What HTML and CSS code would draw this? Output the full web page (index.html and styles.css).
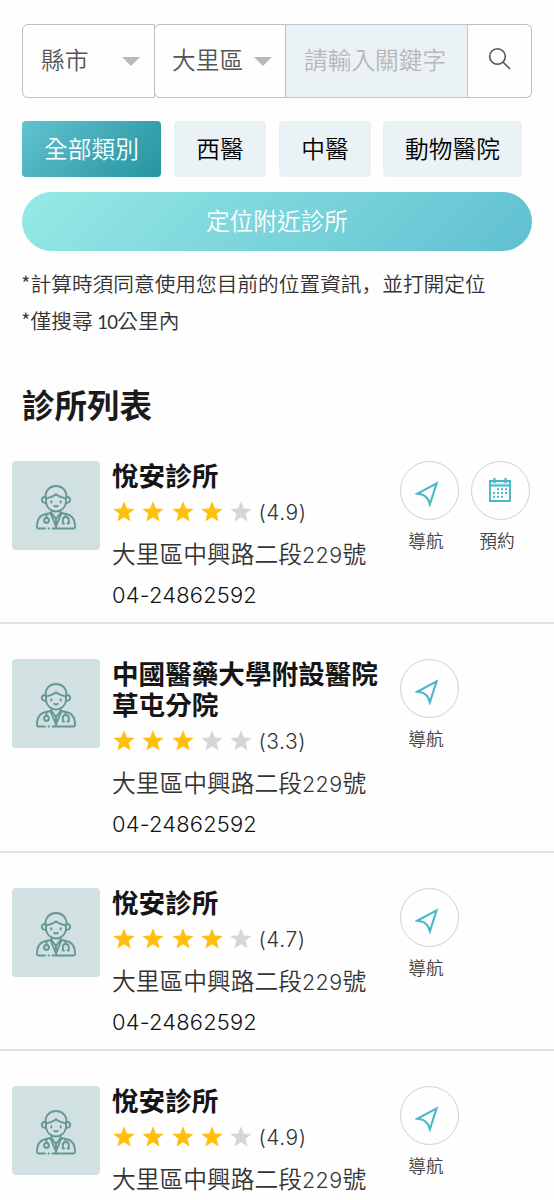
FILE: index.html
```
<!DOCTYPE html>
<html lang="zh-Hant">
<head>
<meta charset="utf-8">
<title>診所列表</title>
<link rel="stylesheet" href="styles.css">
</head>
<body>
<svg class="defs" width="0" height="0">
  <symbol id="star" viewBox="0.500 0.300 21 20"><path d="M11 .5l2.7 6.9 7.5.4-5.8 4.7 1.9 7.4L11 15.9l-6.3 4 1.9-7.4L.8 7.8l7.5-.4z" fill="currentColor"/></symbol>
  <symbol id="nav" viewBox="0 0 24 26"><path d="M21.6 2.4L2.2 12.7Q9 13.500 11 16 13.500 18 14.900 23.200Z" fill="none" stroke="currentColor" stroke-width="2.100"/></symbol>
  <symbol id="calendar" viewBox="0 0 24 26"><path d="M2 4H22V24H2ZM2 8.500H22" fill="none" stroke="currentColor" stroke-width="1.900"/><path d="M1.500 4H22.500V8H1.500Z" fill="currentColor" opacity=".2"/><path d="M6.500 1V6M17.500 1V6" stroke="currentColor" stroke-width="2.300"/><path d="M9 12.300H20M5 16H20M5 19.800H16" fill="none" stroke="currentColor" stroke-width="2" stroke-dasharray="2 2"/></symbol>
  <symbol id="doctor" viewBox="0 0 40 45"><g fill="none" stroke="currentColor" stroke-width="1.900" stroke-linecap="round" stroke-linejoin="round">
    <path d="M9.500 12.500V11.500C9.500 5 14 1 20 1S30.500 5 30.500 11.500V12.500"/>
    <path d="M10 13.500C14.500 12.500 17.500 11.500 20 9.300 22.500 11.500 25.500 12.500 30 13.500"/>
    <path d="M10 13.500V17.500C10.500 22.500 15 26.500 20 26.500S29.500 22.500 30 17.500V13.500"/>
    <path d="M9.500 12C4.500 11.500 4.500 18 10 18M30.500 12C35.500 11.500 35.500 18 30 18"/>
    <path d="M15.300 16.300V17.500M24.700 16.300V17.500M18.200 20.800C19.300 21.800 20.700 21.800 21.800 20.800"/>
    <path d="M15.500 25.500V28L20 34 24.500 28V25.500M15.500 28C7.500 29 2 30 1 40V42Q1 43.500 2.500 43.500H9M12.500 43.500H13M16.500 43.500H37.500Q39 43.500 39 42V40C38 30 32.500 29 24.500 28"/>
    <path d="M14.500 28L20 41.500 25.500 28M20 34V43"/>
    <path d="M10.500 29.500V33"/><circle cx="10.500" cy="35.400" r="2.400"/>
    <path d="M29.500 29.500V32M28 38.500H26.800V35C26.800 31 32.800 31 32.800 35V38.500H31.500"/>
  </g></symbol>
</svg>
<main>
  <section class="search-area">
    <div class="search">
      <div class="select">縣市<i class="caret"></i></div>
      <div class="select second">大里區<i class="caret"></i></div>
      <div class="keyword">請輸入關鍵字</div>
      <div class="submit"><svg width="24" height="24" viewBox="0 0 24 24"><circle cx="9.500" cy="9.500" r="7.800"/><path d="M15.200 15.200L22 22"/></svg></div>
    </div>
    <nav class="tabs">
      <a class="tab active">全部類別</a><a class="tab">西醫</a><a class="tab">中醫</a><a class="tab">動物醫院</a>
    </nav>
    <div class="locate">定位附近診所</div>
    <p class="note">*計算時須同意使用您目前的位置資訊<span class="comma" lang="zh-Hans">，</span>並打開定位</p>
    <p class="note">*僅搜尋 <span class="ten">10</span>公里內</p>
    <h1>診所列表</h1>
  </section>
  <section class="list">
    <article class="clinic">
      <div class="photo"><svg><use href="#doctor"/></svg></div>
      <div class="info">
        <h2>悅安診所</h2>
        <div class="rating"><svg><use href="#star"/></svg><svg><use href="#star"/></svg><svg><use href="#star"/></svg><svg><use href="#star"/></svg><svg class="off"><use href="#star"/></svg><span>(4.9)</span></div>
        <div class="address">大里區中興路二段<span class="num">229</span>號</div>
        <div class="phone">04-24862592</div>
      </div>
      <div class="actions">
        <div class="action"><div class="circle"><svg class="plane"><use href="#nav"/></svg></div>導航</div>
        <div class="action"><div class="circle"><svg class="cal"><use href="#calendar"/></svg></div>預約</div>
      </div>
    </article>
    <article class="clinic">
      <div class="photo"><svg><use href="#doctor"/></svg></div>
      <div class="info">
        <h2>中國醫藥大學附設醫院<br>草屯分院</h2>
        <div class="rating"><svg><use href="#star"/></svg><svg><use href="#star"/></svg><svg><use href="#star"/></svg><svg class="off"><use href="#star"/></svg><svg class="off"><use href="#star"/></svg><span>(3.3)</span></div>
        <div class="address">大里區中興路二段<span class="num">229</span>號</div>
        <div class="phone">04-24862592</div>
      </div>
      <div class="actions">
        <div class="action"><div class="circle"><svg class="plane"><use href="#nav"/></svg></div>導航</div>
      </div>
    </article>
    <article class="clinic">
      <div class="photo"><svg><use href="#doctor"/></svg></div>
      <div class="info">
        <h2>悅安診所</h2>
        <div class="rating"><svg><use href="#star"/></svg><svg><use href="#star"/></svg><svg><use href="#star"/></svg><svg><use href="#star"/></svg><svg class="off"><use href="#star"/></svg><span>(4.7)</span></div>
        <div class="address">大里區中興路二段<span class="num">229</span>號</div>
        <div class="phone">04-24862592</div>
      </div>
      <div class="actions">
        <div class="action"><div class="circle"><svg class="plane"><use href="#nav"/></svg></div>導航</div>
      </div>
    </article>
    <article class="clinic">
      <div class="photo"><svg><use href="#doctor"/></svg></div>
      <div class="info">
        <h2>悅安診所</h2>
        <div class="rating"><svg><use href="#star"/></svg><svg><use href="#star"/></svg><svg><use href="#star"/></svg><svg><use href="#star"/></svg><svg class="off"><use href="#star"/></svg><span>(4.9)</span></div>
        <div class="address">大里區中興路二段<span class="num">229</span>號</div>
      </div>
      <div class="actions">
        <div class="action"><div class="circle"><svg class="plane"><use href="#nav"/></svg></div>導航</div>
      </div>
    </article>
  </section>
</main>
</body>
</html>
```
FILE: styles.css
```
* { box-sizing: border-box; }
html, body { margin: 0; height: 1200px; overflow: hidden; }
body {
  background: #fefefe;
  color: #333;
  font-family: "Noto Sans CJK TC", sans-serif;
  font-weight: 350;
}
.defs { display: block; height: 0; }
.search-area { height: 426px; padding: 24px 22px 0; }
.search {
  display: flex;
  width: 510px;
  height: 74px;
  font-size: 23.7px;
  color: #555;
}
.select {
  display: flex;
  align-items: center;
  justify-content: space-between;
  width: 133px;
  padding: 0 14px 4px 18px;
  border: 1px solid #bdbdbd;
  border-radius: 6px 0 0 6px;
}
.select.second { width: 132px; margin-left: -1px; padding: 0 13px 4px 17px; }
.caret {
  margin-top: 5px;
  border: 9px solid transparent;
  border-top-color: #b8b8b8;
  border-bottom: 0;
}
.keyword {
  width: 182px;
  padding-left: 18px;
  line-height: 68px;
  color: #b8b8b8;
  background: #eaf2f5;
  border: solid #c2c6ca;
  border-width: 1px 1px 1px 0;
}
.submit {
  flex: 1;
  display: flex;
  align-items: center;
  justify-content: center;
  padding-bottom: 5px;
  border: 1px solid #bdbdbd;
  border-left: 0;
  border-radius: 0 6px 6px 0;
}
.submit svg { fill: none; stroke: #555; stroke-width: 1.600; }
.tabs { display: flex; margin-top: 23px; gap: 13px; }
.tab {
  width: 92px;
  height: 56px;
  line-height: 54px;
  text-align: center;
  font-size: 23.7px;
  color: #000;
  background: #eaf2f5;
  border-radius: 4px;
}
.tab:first-child, .tab:last-child { width: 139px; }
.tab:last-child { margin-left: -1px; }
.tab.active { color: #fff; background: linear-gradient(135deg, #62c2d0, #24949e); }
.locate {
  width: 510px;
  height: 59px;
  margin: 15px 0 14px;
  line-height: 57px;
  text-align: center;
  font-size: 23.700px;
  color: #fff;
  border-radius: 30px;
  background: linear-gradient(135deg, #96e9e5, #60c0d1);
}
.note { margin: 0 0 0 -1px; font-size: 20.700px; line-height: 37px; white-space: nowrap; }
.comma { font-family: "Noto Sans CJK SC", sans-serif; }
.ten { font-family: Lato, sans-serif; font-weight: 400; font-size: 18.500px; letter-spacing: -.7px; }
h1 { margin: 37px 0 0; font-size: 32.500px; line-height: 52px; font-weight: 700; color: #1b1b1b; }
.clinic {
  display: flex;
  align-items: flex-start;
  padding: 35px 0 5px 12px;
  border-bottom: 2px solid #dfe4e8;
}
.photo {
  display: flex;
  justify-content: center;
  width: 88px;
  height: 89px;
  padding-top: 24px;
  border-radius: 4px;
  background: #d1e0e0;
  color: #659595;
}
.photo svg { width: 40px; height: 45px; }
.info { width: 300px; padding-left: 12px; }
h2 { margin: -2px 0 2px; font-size: 26.600px; line-height: 31px; font-weight: 700; color: #151515; white-space: nowrap; }
.rating { display: flex; align-items: center; height: 41px; gap: 7.300px; color: #ffbf0b; padding-left: 1px; }
.rating svg { width: 22px; height: 21px; flex: none; margin-top: -2px; }
.rating .off { color: #d4d6d8; }
.rating span { color: #333; font: 350 21px/41px Inter, sans-serif; letter-spacing: .5px; margin-left: -1px; }
.address { margin-top: -1px; font-size: 23.750px; line-height: 42px; height: 43px; white-space: nowrap; }
.num { font-family: Inter, sans-serif; font-size: 21.500px; letter-spacing: .4px; }
.phone { font: 350 21.900px/41px Inter, sans-serif; letter-spacing: .18px; height: 42px; color: #111; }
.actions { display: flex; gap: 12px; }
.action { width: 59px; padding-right: 7px; text-align: center; font-size: 17.800px; line-height: 40px; color: #444; }
.circle {
  display: flex;
  align-items: center;
  justify-content: center;
  width: 59px;
  height: 59px;
  border: 1.500px solid #d0d0d0;
  border-radius: 50%;
  color: #46b8c6;
}
.plane { width: 24px; height: 26px; margin: 7px 5px 0 0; }
.cal { width: 24px; height: 26px; margin: 0 1px 1px 0; }
```
